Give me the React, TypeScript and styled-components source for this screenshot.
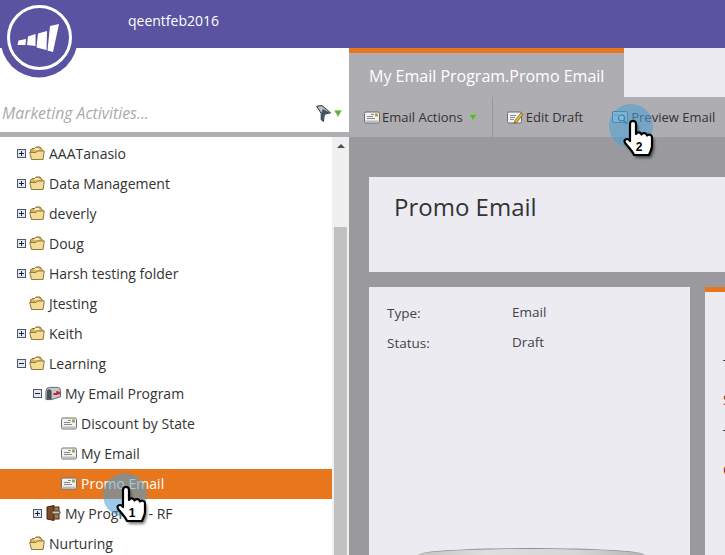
import React from 'react';
import styled, { createGlobalStyle } from 'styled-components';

const GlobalStyle = createGlobalStyle`
  html, body {
    margin: 0;
    padding: 0;
    width: 725px;
    height: 555px;
    overflow: hidden;
    background: #fff;
    font-family: "Open Sans", "Noto Sans", sans-serif;
  }
`;

const MailIcon = () => (
  <svg width="16" height="13" viewBox="0 0 16 13">
    <rect x="0.5" y="1" width="15" height="11" rx="1.5" fill="#f1f1f1" stroke="#6f6f6f" />
    <rect x="1.5" y="9.5" width="13" height="2" fill="#bdbdbd" />
    <rect x="11" y="2.5" width="3" height="3" fill="#a5a34c" />
    <path d="M3 5.5h6M3 7.5h8M7 3.5h3" stroke="#8a8a8a" strokeWidth="1" />
  </svg>
);

const FolderIcon = () => (
  <svg width="16" height="15" viewBox="0 0 16 15">
    <path d="M1.500 4 3 2.500h3L7 1h4l2 2.500 1 1V13H2.500Z" fill="#d9b45f" stroke="#8a6d2c" />
    <path d="M5 3.500h5.500M6 2.500h4" stroke="#f6ecc8" />
    <path d="M.7 6.500H7L8.500 5h6.800L14 13.500H2.500Z" fill="#f2dc97" stroke="#97793a" strokeLinejoin="round" />
  </svg>
);

const MailboxIcon = () => (
  <svg width="17" height="16" viewBox="0 0 17 16">
    <path d="M1 6a4 4 0 0 1 4-4h8a3.500 3.500 0 0 1 3.500 3.500V12L7 15H1Z" fill="#c3c8cc" stroke="#5d6368" />
    <path d="M2 7a2.500 3 0 0 1 5 0v8H2Z" fill="#4a5054" />
    <path d="M9 8h3V5.500l4 1.500v2l-4 1H9Z" fill="#d22020" />
  </svg>
);

const ProgramIcon = () => (
  <svg width="16" height="16" viewBox="0 0 16 16">
    <path d="M2 2 9 .5v15L2 14Z" fill="#7a4a2a" stroke="#3f2412" />
    <rect x="9" y="2" width="5" height="12" fill="#a8764e" stroke="#4d2f1a" />
    <rect x="7" y="6" width="8" height="3" rx="1" fill="#c9c2b6" stroke="#4b4036" />
  </svg>
);

const EditIcon = () => (
  <svg width="17" height="15" viewBox="0 0 17 15">
    <rect x="0.5" y="2" width="14" height="11" rx="1.5" fill="#f1f1f1" stroke="#6f6f6f" />
    <path d="M3 5.500h6M3 7.500h5M3 9.500h4" stroke="#8a8a8a" />
    <path d="M7 13.500 8 10.500 14 3l2 1.500-6 7.500Z" fill="#e8b83a" stroke="#7a5d12" strokeWidth="0.8" />
  </svg>
);

const PreviewIcon = () => (
  <svg width="17" height="15" viewBox="0 0 17 15">
    <rect x="0.5" y="1.5" width="15" height="11" rx="1.5" fill="#b9cfdc" stroke="#56707f" />
    <circle cx="9.5" cy="8" r="3" fill="#cfe2ec" stroke="#35566a" strokeWidth="1.2" />
    <path d="M11.500 10.500 15 14" stroke="#35566a" strokeWidth="1.5" />
    <path d="M2.500 5h3" stroke="#6f8796" />
  </svg>
);

const FilterIcon = () => (
  <svg width="15" height="17" viewBox="0 0 15 17">
    <path d="M.6 1.200 6 .6l8.600 7.200-6.200 1.500-1 7.200-2.200-1.700V8.400Z" fill="#b9c2c9" stroke="#26323b" />
    <path d="M5.200 8.400 6.800 4l7 3.800-5.600 1.400-1 6.400-2-1.400Z" fill="#44535e" />
  </svg>
);

const Caret = () => (
  <svg width="8" height="7" viewBox="0 0 8 7">
    <path d="M.5.5h7L4 6.500Z" fill="#5fb136" stroke="#8fcf6c" strokeWidth="0.6" />
  </svg>
);

const handPath =
  'M8 4a3 3 0 0 1 6 0v10a3 3 0 0 1 5.500 .5 3 3 0 0 1 5.500 1 3 3 0 0 1 5 1.500V26c0 3-1.500 5-3 9H12c-1-3-3-5-8.500-11.500-2-2.500-.5-4.500 1.500-4.500 1 0 2 .5 3 2Z';

const Hand = ({ n }: { n: string }) => (
  <svg width="38" height="42" viewBox="0 0 38 42">
    <defs>
      <filter id={`hs${n}`} x="-30%" y="-30%" width="160%" height="160%">
        <feGaussianBlur stdDeviation="1.6" />
      </filter>
    </defs>
    <path d={handPath} fill="#000" opacity="0.55" transform="translate(2 3)" filter={`url(#hs${n})`} />
    <path d={handPath} fill="#fff" stroke="#000" strokeWidth="2.2" strokeLinejoin="round" />
    <text x="17" y="31" fontFamily="'Liberation Sans', sans-serif" fontWeight="700" fontSize="12" textAnchor="middle" fill="#000">
      {n}
    </text>
  </svg>
);

const Shell = styled.div`
  width: 725px;
  height: 555px;
  display: flex;
  flex-direction: column;
  overflow: hidden;
  position: relative;
`;

const TopBar = styled.div`
  height: 48px;
  flex: none;
  background: #5a53a2;
  color: #fff;
  font-size: 14px;
  padding-left: 128px;
  line-height: 42px;
  box-sizing: border-box;
`;

const LogoBadge = styled.div`
  position: absolute;
  left: 0;
  top: 0;
  width: 78px;
  height: 78px;
  z-index: 3;
`;

const Body = styled.div`
  flex: 1;
  display: flex;
  min-height: 0;
`;

const Sidebar = styled.aside`
  width: 349px;
  flex: none;
  display: flex;
  flex-direction: column;
  background: #fff;
`;

const SearchRow = styled.div`
  height: 89px;
  flex: none;
  box-sizing: border-box;
  border-bottom: 5px solid #aeaeb3;
  display: flex;
  align-items: flex-end;
  justify-content: space-between;
  padding: 0 7px 7px 2px;
`;

const SearchHint = styled.span`
  font-size: 15.8px;
  line-height: 24px;
  font-style: italic;
  color: #aaa9ac;
`;

const SearchIcons = styled.span`
  display: flex;
  align-items: center;
  gap: 3px;
  height: 24px;
`;

const TreeArea = styled.div`
  flex: 1;
  display: flex;
  min-height: 0;
`;

const Tree = styled.ul`
  flex: 1;
  list-style: none;
  margin: 0;
  padding: 2px 0 0;
  overflow: hidden;
`;

const TreeRow = styled.li<{ $depth: number; $active?: boolean }>`
  height: 30px;
  box-sizing: border-box;
  padding-bottom: 2px;
  display: flex;
  align-items: center;
  padding-left: ${(p) => 17 + p.$depth * 16}px;
  font-size: 14px;
  color: ${(p) => (p.$active ? '#fff' : '#333')};
  background: ${(p) => (p.$active ? '#e8761c' : 'transparent')};
`;

const Toggle = styled.span`
  width: 9px;
  height: 9px;
  flex: none;
  box-sizing: border-box;
  border: 1px solid #49596b;
  background: #e3e8ee;
  margin-right: 3px;
  position: relative;
  &::before {
    content: '';
    position: absolute;
    left: 1px;
    right: 1px;
    top: 3px;
    height: 1px;
    background: #223;
  }
`;

const PlusToggle = styled(Toggle)`
  &::after {
    content: '';
    position: absolute;
    top: 1px;
    bottom: 1px;
    left: 3px;
    width: 1px;
    background: #223;
  }
`;

const NoToggle = styled.span`
  width: 12px;
  flex: none;
`;

const RowIcon = styled.span`
  display: flex;
  align-items: center;
  width: 16px;
  margin-right: 4px;
  flex: none;
`;

const Scrollbar = styled.div`
  width: 17px;
  flex: none;
  background: #f0f0f0;
  display: flex;
  flex-direction: column;
`;

const ScrollUp = styled.div`
  height: 17px;
  display: flex;
  justify-content: center;
  padding-top: 7px;
  box-sizing: border-box;
  &::before {
    content: '';
    border-left: 4px solid transparent;
    border-right: 4px solid transparent;
    border-bottom: 4px solid #505050;
    height: 0;
  }
`;

const ScrollGap = styled.div`
  height: 73px;
  flex: none;
`;

const ScrollThumb = styled.div`
  flex: 1;
  background: #c1c1c1;
  margin: 0 2px;
`;

const Main = styled.main`
  flex: 1;
  min-width: 0;
  display: flex;
  flex-direction: column;
  background: #9a999e;
`;

const TabStrip = styled.div`
  height: 49px;
  flex: none;
  display: flex;
  background: #ecebf2;
`;

const Tab = styled.div`
  width: 275px;
  box-sizing: border-box;
  border-top: 5px solid #e8761c;
  background: #aeadb2;
  color: #fff;
  font-size: 16px;
  line-height: 46px;
  padding-left: 20px;
`;

const Toolbar = styled.div`
  height: 40px;
  flex: none;
  display: flex;
  align-items: center;
  background: #aeadb2;
  font-size: 13px;
  color: #333;
`;

const ToolItem = styled.div<{ $divider?: boolean }>`
  height: 100%;
  display: flex;
  align-items: center;
  gap: 2px;
  box-sizing: border-box;
  padding: 0 15px 0 ${(p) => (p.$divider ? 15 : 14)}px;
  border-right: ${(p) => (p.$divider ? '1px solid #98979c' : 'none')};
  white-space: nowrap;
`;

const ToolCaret = styled.span`
  display: flex;
  margin-left: 4px;
`;

const Content = styled.div`
  flex: 1;
  padding: 40px 0 0 20px;
  display: flex;
  flex-direction: column;
  gap: 15px;
  min-height: 0;
`;

const TitleCard = styled.div`
  height: 95px;
  flex: none;
  background: #ecebf2;
  font-size: 24px;
  color: #333;
  padding: 13px 0 0 25px;
  box-sizing: border-box;
`;

const Columns = styled.div`
  flex: 1;
  display: flex;
  gap: 15px;
  min-height: 0;
`;

const InfoCard = styled.div`
  width: 321px;
  flex: none;
  background: #ecebf2;
  box-sizing: border-box;
  padding: 17px 18px 0;
  position: relative;
  overflow: hidden;
`;

const InfoRow = styled.div`
  display: grid;
  grid-template-columns: 125px 1fr;
  height: 30px;
  font-size: 13.5px;
  line-height: 19px;
  color: #444;
`;

const InfoValue = styled.span`
  position: relative;
  top: -1px;
`;

const DeviceTop = styled.div`
  position: absolute;
  left: 49px;
  bottom: 0;
  width: 227px;
  height: 7px;
  box-sizing: border-box;
  border-radius: 50% 50% 0 0 / 100% 100% 0 0;
  background: linear-gradient(90deg, #c4c4c4, #dedede 30%, #d6d6d6 70%, #b4b4b4);
  border-top: 1px solid #8f8f8f;
`;

const PreviewCard = styled.div`
  flex: 1;
  background: #ecebf2;
  border-top: 5px solid #e8761c;
  box-sizing: border-box;
  padding: 63px 0 0 18px;
  overflow: hidden;
  font-size: 14px;
`;

const PreviewLine = styled.div<{ $color: string }>`
  height: 35px;
  line-height: 20px;
  color: ${(p) => p.$color};
  white-space: nowrap;
`;

const Spot = styled.div<{ $x: number; $y: number }>`
  position: absolute;
  left: ${(p) => p.$x}px;
  top: ${(p) => p.$y}px;
  width: 44px;
  height: 44px;
  border-radius: 50%;
  background: rgba(72, 158, 214, 0.55);
  z-index: 4;
`;

const Pointer = styled.div<{ $x: number; $y: number }>`
  position: absolute;
  left: ${(p) => p.$x}px;
  top: ${(p) => p.$y}px;
  z-index: 5;
  line-height: 0;
`;

type Kind = 'folder' | 'mailbox' | 'program' | 'mail';
type Row = { label: string; depth: number; toggle?: 'plus' | 'minus'; icon: Kind; active?: boolean };

const rows: Row[] = [
  { label: 'AAATanasio', depth: 0, toggle: 'plus', icon: 'folder' },
  { label: 'Data Management', depth: 0, toggle: 'plus', icon: 'folder' },
  { label: 'deverly', depth: 0, toggle: 'plus', icon: 'folder' },
  { label: 'Doug', depth: 0, toggle: 'plus', icon: 'folder' },
  { label: 'Harsh testing folder', depth: 0, toggle: 'plus', icon: 'folder' },
  { label: 'Jtesting', depth: 0, icon: 'folder' },
  { label: 'Keith', depth: 0, toggle: 'plus', icon: 'folder' },
  { label: 'Learning', depth: 0, toggle: 'minus', icon: 'folder' },
  { label: 'My Email Program', depth: 1, toggle: 'minus', icon: 'mailbox' },
  { label: 'Discount by State', depth: 2, icon: 'mail' },
  { label: 'My Email', depth: 2, icon: 'mail' },
  { label: 'Promo Email', depth: 2, icon: 'mail', active: true },
  { label: 'My Program - RF', depth: 1, toggle: 'plus', icon: 'program' },
  { label: 'Nurturing', depth: 0, icon: 'folder' },
];

const icons: Record<Kind, React.ReactNode> = {
  folder: <FolderIcon />,
  mailbox: <MailboxIcon />,
  program: <ProgramIcon />,
  mail: <MailIcon />,
};

const App: React.FC = () => {
  return (
    <Shell>
      <GlobalStyle />
      <LogoBadge>
        <svg width="78" height="78" viewBox="0 0 78 78">
          <circle cx="39" cy="39" r="38.5" fill="#5a53a2" />
          <circle cx="39.5" cy="37.5" r="31" fill="none" stroke="#fff" strokeWidth="3" />
          <path d="M18.500 40.500 26 39 25.500 45 17.500 45ZM28 36.500 35.500 34 35.500 46 27 45ZM38 33.500 47 31 46.500 50 36.500 47.500ZM50 26 59 24 53 52 47.500 50.500Z" fill="#fff" />
        </svg>
      </LogoBadge>
      <TopBar>qeentfeb2016</TopBar>
      <Body>
        <Sidebar>
          <SearchRow>
            <SearchHint>Marketing Activities...</SearchHint>
            <SearchIcons>
              <FilterIcon />
              <Caret />
            </SearchIcons>
          </SearchRow>
          <TreeArea>
            <Tree>
              {rows.map((r) => (
                <TreeRow key={r.label} $depth={r.depth} $active={r.active}>
                  {r.toggle === 'plus' && <PlusToggle />}
                  {r.toggle === 'minus' && <Toggle />}
                  {!r.toggle && <NoToggle />}
                  <RowIcon>{icons[r.icon]}</RowIcon>
                  {r.label}
                </TreeRow>
              ))}
            </Tree>
            <Scrollbar>
              <ScrollUp />
              <ScrollGap />
              <ScrollThumb />
            </Scrollbar>
          </TreeArea>
        </Sidebar>
        <Main>
          <TabStrip>
            <Tab>My Email Program.Promo Email</Tab>
          </TabStrip>
          <Toolbar>
            <ToolItem $divider>
              <MailIcon />
              Email Actions
              <ToolCaret>
                <Caret />
              </ToolCaret>
            </ToolItem>
            <ToolItem>
              <EditIcon />
              Edit Draft
            </ToolItem>
            <ToolItem>
              <PreviewIcon />
              Preview Email
            </ToolItem>
          </Toolbar>
          <Content>
            <TitleCard>Promo Email</TitleCard>
            <Columns>
              <InfoCard>
                <InfoRow>
                  <span>Type:</span>
                  <InfoValue>Email</InfoValue>
                </InfoRow>
                <InfoRow>
                  <span>Status:</span>
                  <InfoValue>Draft</InfoValue>
                </InfoRow>
                <DeviceTop />
              </InfoCard>
              <PreviewCard>
                <PreviewLine $color="#333">T</PreviewLine>
                <PreviewLine $color="#8c2a2a">S</PreviewLine>
                <PreviewLine $color="#333">T</PreviewLine>
                <PreviewLine $color="#8c2a2a">C</PreviewLine>
              </PreviewCard>
            </Columns>
          </Content>
        </Main>
      </Body>
      <Spot $x={103} $y={473} />
      <Pointer $x={115} $y={486}>
        <Hand n="1" />
      </Pointer>
      <Spot $x={609} $y={104} />
      <Pointer $x={622} $y={120}>
        <Hand n="2" />
      </Pointer>
    </Shell>
  );
};

export default App;
